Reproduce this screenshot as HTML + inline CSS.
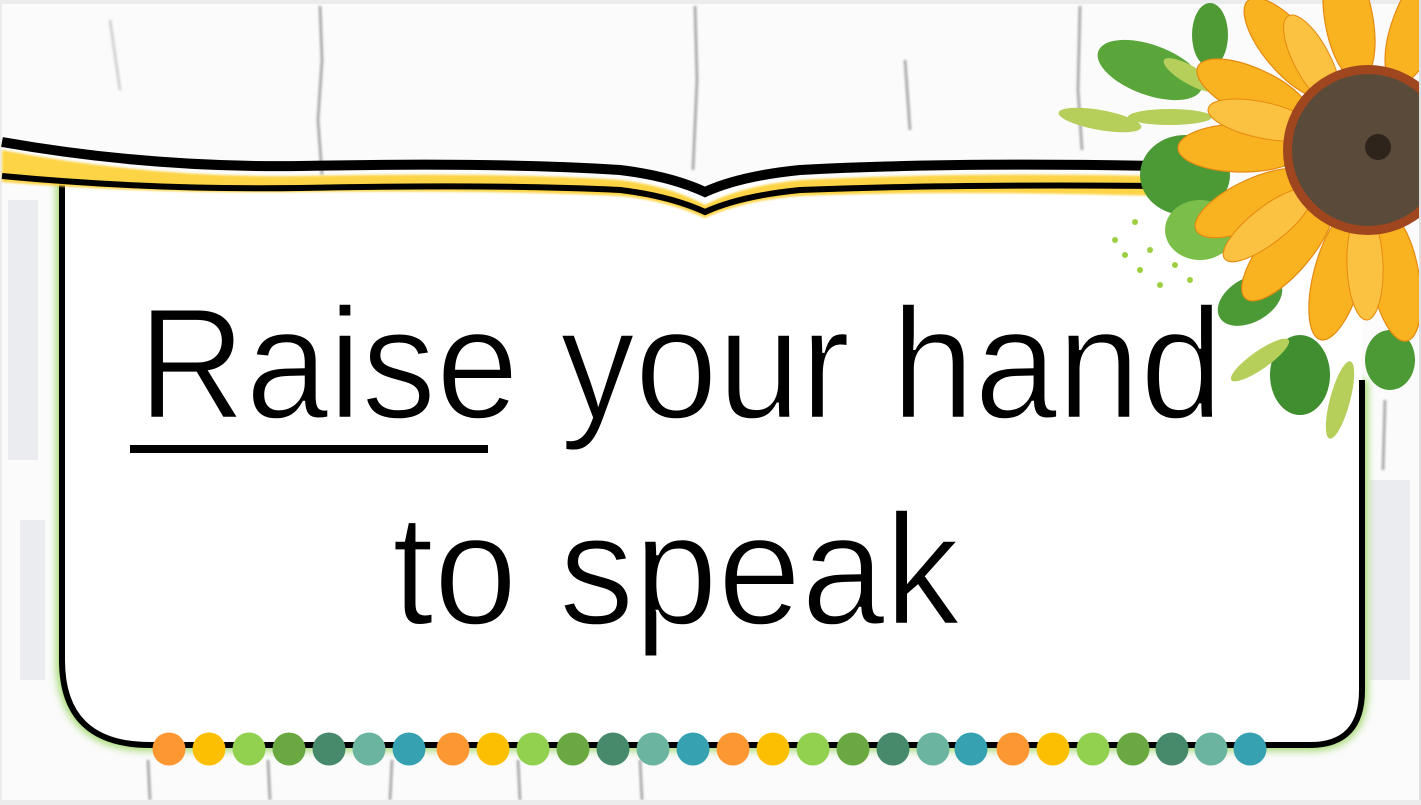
<!DOCTYPE html>
<html><head><meta charset="utf-8"><style>
html,body{margin:0;padding:0;background:#f0f0f0;}
svg{display:block}
</style></head><body>
<svg width="1421" height="805" viewBox="0 0 1421 805" xmlns="http://www.w3.org/2000/svg">
<defs>
<filter id="glow" x="-10%" y="-10%" width="120%" height="120%"><feGaussianBlur stdDeviation="4"/></filter>
<filter id="blur1"><feGaussianBlur stdDeviation="1"/></filter>
</defs>
<rect x="0" y="0" width="1421" height="805" fill="#ececec"/>
<rect x="2" y="4" width="1417" height="796" fill="#fbfbfb"/>
<g stroke="#9a9a9a" stroke-width="3" fill="none" filter="url(#blur1)" opacity="0.8">
<path d="M320 6 L322 60 L318 120 L322 175"/>
<path d="M695 6 L697 80 L693 170"/>
<path d="M1080 6 L1078 90 L1082 150"/>
<path d="M148 760 L150 800"/><path d="M268 760 L270 800"/><path d="M392 760 L390 800"/><path d="M518 760 L520 800"/><path d="M640 760 L642 800"/><path d="M1385 400 L1383 470"/>
<path d="M905 60 L910 130"/><path d="M110 20 L120 90" stroke="#c8c8c8"/>
</g>
<g fill="#e4e6ea" opacity="0.7">
<rect x="8" y="200" width="30" height="260"/><rect x="1370" y="480" width="40" height="200"/>
<rect x="20" y="520" width="25" height="160"/>
</g>
<path d="M62 180 L62 660 Q62 745 150 745 L1310 745 Q1362 745 1362 690 L1362 380" fill="none" stroke="#8fd14f" stroke-width="12" filter="url(#glow)" opacity="0.8"/>
<path d="M62 180 L62 660 Q62 745 150 745 L1310 745 Q1362 745 1362 690 L1362 180 Z" fill="#fff"/>
<path d="M62 180 L62 660 Q62 745 150 745 L1310 745 Q1362 745 1362 690 L1362 380" fill="none" stroke="#000" stroke-width="6"/>
<path d="M2 150 Q150 178 300 176 Q500 172 620 180 Q670 186 705 205 Q740 186 800 180 Q950 172 1160 176 L1160 196 Q950 190 800 196 Q745 200 705 218 Q665 200 620 196 Q500 190 300 192 Q150 194 2 182 Z" fill="#fcd444" filter="url(#blur1)"/>
<path d="M2 142 Q150 168 300 166 Q500 162 620 170 Q670 176 705 192 Q740 176 800 170 Q950 162 1160 166" fill="none" stroke="#000" stroke-width="10"/>
<path d="M2 176 Q150 190 300 188 Q500 184 620 190 Q670 196 705 212 Q740 196 800 190 Q950 184 1160 186" fill="none" stroke="#000" stroke-width="6"/>
<g font-family="'Comic Sans MS','Liberation Sans',sans-serif" fill="#000" stroke="#fff" stroke-width="2.5" paint-order="normal">
<text x="138" y="418" font-size="158" textLength="1085" lengthAdjust="spacingAndGlyphs">Raise your hand</text>
<text x="392" y="624" font-size="158" textLength="568" lengthAdjust="spacingAndGlyphs">to speak</text>
</g>
<rect x="130" y="445" width="358" height="8" fill="#000"/>
<g>
<circle cx="169" cy="749" r="16.5" fill="#fd9731"/><circle cx="209" cy="749" r="16.5" fill="#fdbf02"/><circle cx="249" cy="749" r="16.5" fill="#92d050"/><circle cx="289" cy="749" r="16.5" fill="#6aa842"/><circle cx="329" cy="749" r="16.5" fill="#46896b"/><circle cx="369" cy="749" r="16.5" fill="#6bb49f"/><circle cx="409" cy="749" r="16.5" fill="#35a1b1"/>
<circle cx="453" cy="749" r="16.5" fill="#fd9731"/><circle cx="493" cy="749" r="16.5" fill="#fdbf02"/><circle cx="533" cy="749" r="16.5" fill="#92d050"/><circle cx="573" cy="749" r="16.5" fill="#6aa842"/><circle cx="613" cy="749" r="16.5" fill="#46896b"/><circle cx="653" cy="749" r="16.5" fill="#6bb49f"/><circle cx="693" cy="749" r="16.5" fill="#35a1b1"/>
<circle cx="733" cy="749" r="16.5" fill="#fd9731"/><circle cx="773" cy="749" r="16.5" fill="#fdbf02"/><circle cx="813" cy="749" r="16.5" fill="#92d050"/><circle cx="853" cy="749" r="16.5" fill="#6aa842"/><circle cx="893" cy="749" r="16.5" fill="#46896b"/><circle cx="933" cy="749" r="16.5" fill="#6bb49f"/><circle cx="971" cy="749" r="16.5" fill="#35a1b1"/>
<circle cx="1013" cy="749" r="16.5" fill="#fd9731"/><circle cx="1053" cy="749" r="16.5" fill="#fdbf02"/><circle cx="1093" cy="749" r="16.5" fill="#92d050"/><circle cx="1133" cy="749" r="16.5" fill="#6aa842"/><circle cx="1172" cy="749" r="16.5" fill="#46896b"/><circle cx="1211" cy="749" r="16.5" fill="#6bb49f"/><circle cx="1250" cy="749" r="16.5" fill="#35a1b1"/>
</g>
<g>
<ellipse cx="1150" cy="70" rx="55" ry="25" fill="#5aa63a" transform="rotate(20 1150 70)"/>
<ellipse cx="1210" cy="35" rx="18" ry="32" fill="#4f9a34"/>
<ellipse cx="1100" cy="120" rx="42" ry="10" fill="#b5cf5a" transform="rotate(10 1100 120)"/>
<ellipse cx="1170" cy="117" rx="42" ry="8" fill="#b5cf5a"/>
<ellipse cx="1190" cy="75" rx="30" ry="9" fill="#b5cf5a" transform="rotate(30 1190 75)"/>
<ellipse cx="1185" cy="175" rx="45" ry="40" fill="#4c9a36"/>
<ellipse cx="1200" cy="230" rx="35" ry="30" fill="#7bbf4a"/>
<ellipse cx="1250" cy="300" rx="35" ry="22" fill="#4c9a36" transform="rotate(-30 1250 300)"/>
<ellipse cx="1300" cy="375" rx="30" ry="40" fill="#3f8e2f"/>
<ellipse cx="1390" cy="360" rx="25" ry="30" fill="#4c9a36"/>
<ellipse cx="1340" cy="400" rx="10" ry="40" fill="#b5cf5a" transform="rotate(15 1340 400)"/>
<ellipse cx="1260" cy="360" rx="35" ry="9" fill="#b5cf5a" transform="rotate(-35 1260 360)"/>
<g fill="#9ccf40"><circle cx="1115" cy="240" r="3"/><circle cx="1125" cy="255" r="3"/><circle cx="1140" cy="270" r="3"/><circle cx="1160" cy="285" r="3"/><circle cx="1150" cy="250" r="3"/><circle cx="1175" cy="265" r="3"/><circle cx="1190" cy="280" r="3"/><circle cx="1135" cy="222" r="3"/></g>
</g>
<g fill="#f9b321" stroke="#e58a10" stroke-width="1.2">
<ellipse cx="1349" cy="20" rx="24" ry="62" transform="rotate(-10 1349 20)"/>
<ellipse cx="1416" cy="26" rx="24" ry="62" transform="rotate(20 1416 26)"/>
<ellipse cx="1288" cy="48" rx="24" ry="62" transform="rotate(-40 1288 48)"/>
<ellipse cx="1254" cy="93" rx="24" ry="62" transform="rotate(-65 1254 93)"/>
<ellipse cx="1242" cy="148" rx="24" ry="64" transform="rotate(-90 1242 148)"/>
<ellipse cx="1254" cy="203" rx="24" ry="64" transform="rotate(-115 1254 203)"/>
<ellipse cx="1288" cy="248" rx="24" ry="66" transform="rotate(-140 1288 248)"/>
<ellipse cx="1338" cy="274" rx="24" ry="68" transform="rotate(-165 1338 274)"/>
<ellipse cx="1395" cy="276" rx="24" ry="66" transform="rotate(170 1395 276)"/>
</g>
<g fill="#fbc140" stroke="#e58a10" stroke-width="1">
<ellipse cx="1262" cy="120" rx="18" ry="55" transform="rotate(-78 1262 120)"/>
<ellipse cx="1268" cy="225" rx="18" ry="55" transform="rotate(-128 1268 225)"/>
<ellipse cx="1312" cy="60" rx="18" ry="50" transform="rotate(-28 1312 60)"/>
<ellipse cx="1365" cy="265" rx="18" ry="55" transform="rotate(178 1365 265)"/>
</g>
<circle cx="1368" cy="150" r="85" fill="#a0461e"/>
<circle cx="1368" cy="150" r="76" fill="#5a4a3a"/>
<circle cx="1378" cy="147" r="13" fill="#2e241c"/>
<rect x="1419" y="0" width="2" height="805" fill="#e0e0e0"/>
<rect x="0" y="800" width="1421" height="5" fill="#ececec"/>
</svg>
</body></html>
